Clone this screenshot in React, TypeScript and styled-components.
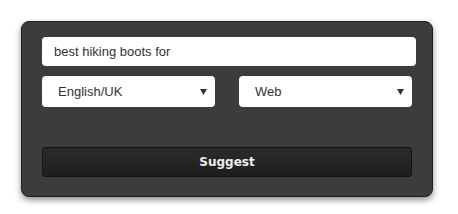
import styled, { createGlobalStyle } from 'styled-components'

const Global = createGlobalStyle`
  html, body { margin: 0; padding: 0; background: #fff; }
  body { font-family: 'Liberation Sans', Arial, sans-serif; }
`

const Page = styled.div`
  padding: 21px;
  width: 412px;
`

const Panel = styled.form`
  box-sizing: border-box;
  width: 412px;
  height: 176px;
  padding: 15px 16px 19px 20px;
  background: #3c3c3c;
  border: 1px solid #1e1e1e;
  border-radius: 8px;
  box-shadow: 0 3px 6px rgba(0, 0, 0, 0.45);
  display: flex;
  flex-direction: column;
`

const QueryInput = styled.input`
  box-sizing: border-box;
  width: 374px;
  height: 29px;
  padding: 0 12px;
  border: none;
  border-radius: 4px;
  background: #fff;
  font-family: 'Liberation Sans', Arial, sans-serif;
  font-size: 13px;
  color: #333;
  outline: none;
`

const Row = styled.div`
  display: flex;
  gap: 24px;
  width: 370px;
  margin-top: 10px;
`

const SelectBox = styled.div`
  box-sizing: border-box;
  flex: 1;
  height: 31px;
  padding: 0 8px 0 16px;
  border-radius: 4px;
  background: #fff;
  display: flex;
  align-items: center;
  justify-content: space-between;
  font-size: 13px;
  color: #333;
`

const Arrow = styled.svg`
  width: 7px;
  height: 6px;
  fill: #333;
`

const SuggestButton = styled.button`
  box-sizing: border-box;
  width: 370px;
  height: 30px;
  margin-top: auto;
  border: 1px solid #141414;
  border-radius: 3px;
  background: linear-gradient(#2b2b2b, #1e1e1e);
  color: #eee;
  font-family: 'DejaVu Sans', Verdana, sans-serif;
  font-weight: bold;
  font-size: 12px;
  cursor: pointer;
`

function Select({ value }: { value: string }) {
  return (
    <SelectBox>
      <span>{value}</span>
      <Arrow viewBox="0 0 7 6">
        <path d="M0 0h7L3.5 6z" />
      </Arrow>
    </SelectBox>
  )
}

export default function App() {
  return (
    <Page>
      <Global />
      <Panel onSubmit={(e) => e.preventDefault()}>
        <QueryInput defaultValue="best hiking boots for" />
        <Row>
          <Select value="English/UK" />
          <Select value="Web" />
        </Row>
        <SuggestButton type="submit">Suggest</SuggestButton>
      </Panel>
    </Page>
  )
}
